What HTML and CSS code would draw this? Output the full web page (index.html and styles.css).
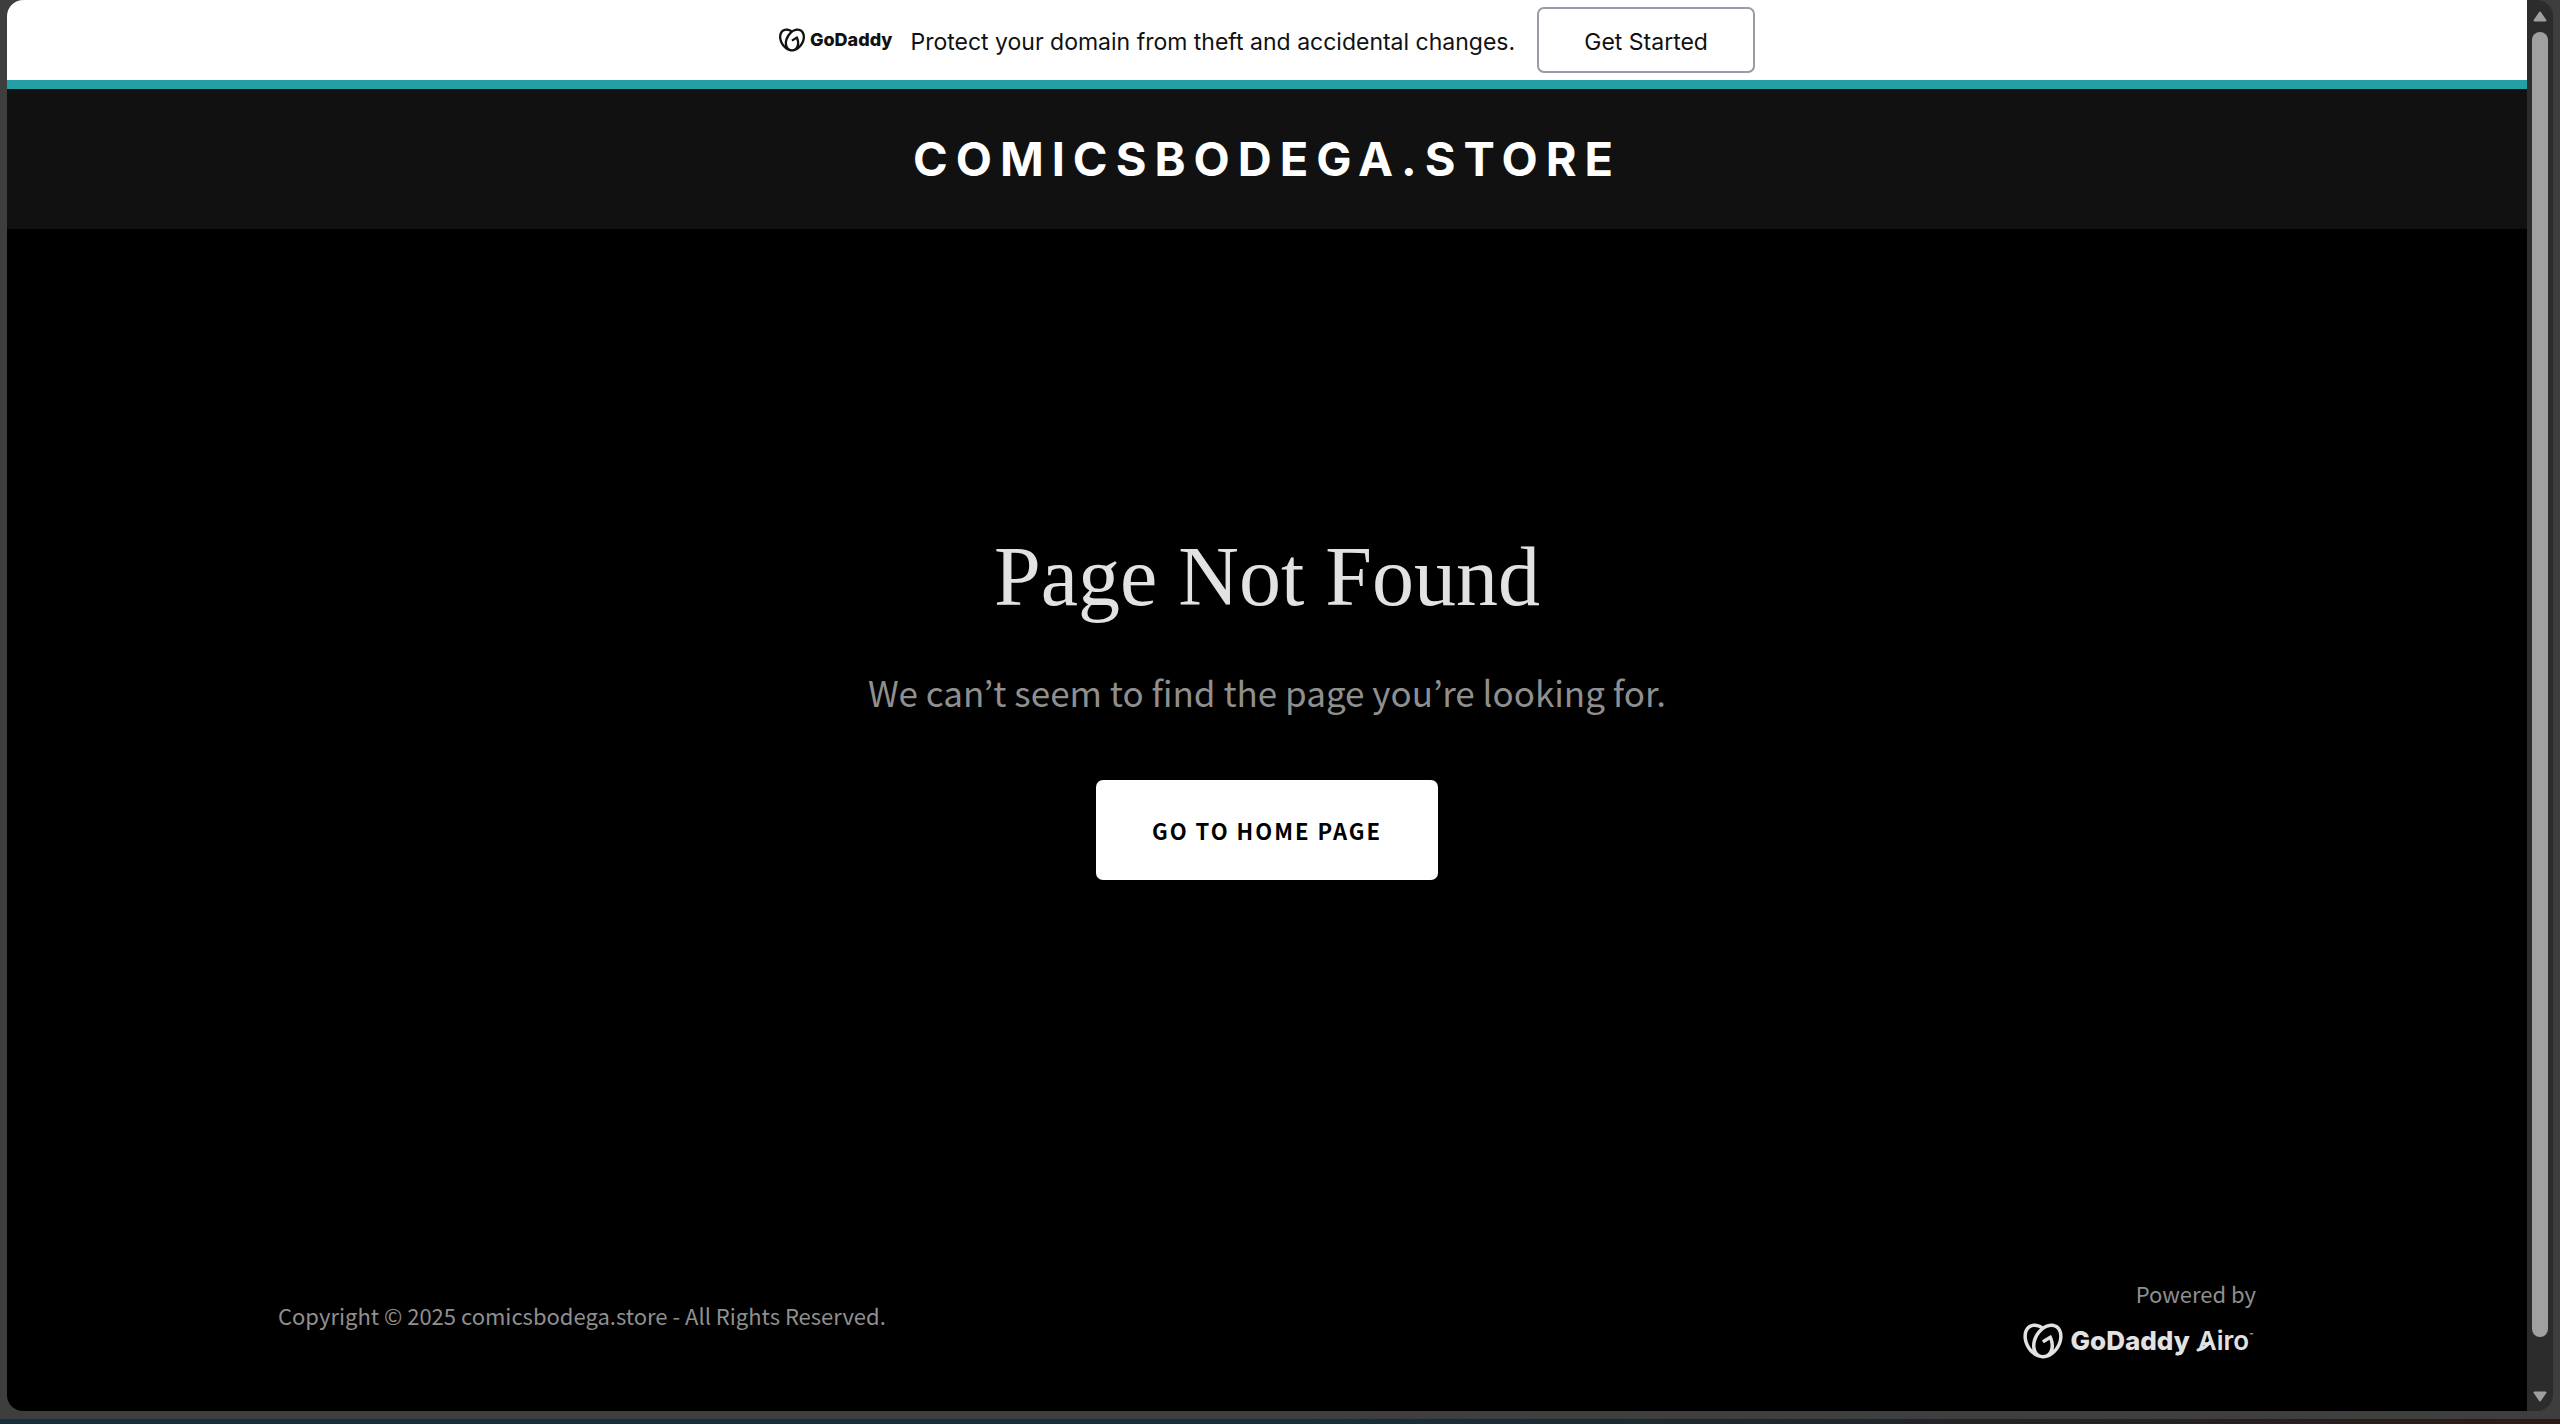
FILE: index.html
```html
<!DOCTYPE html>
<html lang="en">
<head>
<meta charset="utf-8">
<title>Page Not Found</title>
<link rel="stylesheet" href="styles.css">
</head>
<body>
<svg width="0" height="0" class="sprite" aria-hidden="true">
  <symbol id="heart" viewBox="0 1 24 22">
    <path fill="currentColor" d="M20.702 2.29c-2.494-1.554-5.778-1.187-8.706.654C9.076 1.104 5.79.736 3.3 2.29c-3.941 2.463-4.42 8.806-1.07 14.167 2.47 3.954 6.333 6.269 9.77 6.226 3.439.043 7.301-2.273 9.771-6.226 3.347-5.361 2.872-11.704-1.069-14.167zM4.042 15.328a12.838 12.838 0 01-1.546-3.541 10.12 10.12 0 01-.336-3.338c.15-1.98.956-3.524 2.27-4.345 1.315-.822 3.052-.87 4.903-.137.281.113.556.24.825.382A15.11 15.11 0 007.5 7.54c-2.035 3.255-2.655 6.878-1.945 9.765a13.247 13.247 0 01-1.514-1.98zm17.465-3.541a12.866 12.866 0 01-1.547 3.54 13.25 13.25 0 01-1.513 1.984c.635-2.589.203-5.76-1.353-8.734a.39.39 0 00-.563-.153l-4.852 3.032a.397.397 0 00-.126.546l.712 1.139a.395.395 0 00.547.126l3.145-1.965c.101.306.203.606.28.916.296 1.086.41 2.214.335 3.337-.15 1.982-.956 3.525-2.27 4.347a4.437 4.437 0 01-2.25.65h-.101a4.432 4.432 0 01-2.25-.65c-1.314-.822-2.121-2.365-2.27-4.347-.074-1.123.039-2.251.336-3.337a13.212 13.212 0 014.05-6.482 10.148 10.148 0 012.849-1.765c1.845-.733 3.586-.685 4.9.137 1.316.822 2.122 2.365 2.271 4.345a10.146 10.146 0 01-.33 3.334z"/>
  </symbol>
</svg>
<div class="window">
  <div class="page">
    <aside class="banner">
      <span class="brand"><svg class="brand-mark"><use href="#heart"/></svg><span>GoDaddy</span></span>
      <p class="banner-text">Protect your domain from theft and accidental changes.</p>
      <button class="banner-button" type="button">Get Started</button>
    </aside>
    <header class="header">
      <a class="site-name" href="#">COMICSBODEGA.STORE</a>
    </header>
    <main class="main">
      <h1 class="title">Page Not Found</h1>
      <p class="message">We can’t seem to find the page you’re looking for.</p>
      <a class="home-link" href="#">GO TO HOME PAGE</a>
    </main>
    <footer class="footer">
      <p class="copyright">Copyright © 2025 comicsbodega.store - All Rights Reserved.</p>
      <div class="powered">
        <span>Powered by</span>
        <a class="airo" href="#"><svg class="airo-mark"><use href="#heart"/></svg><span>GoDaddy</span><span class="airo-name">Airo<span class="tm">™</span><svg class="swoosh" viewBox="0 0 20 14"><path d="M2 12C7 11 11 8 14 4" fill="none" stroke="currentColor" stroke-width="3" stroke-linecap="round"/></svg></span></a>
      </div>
    </footer>
  </div>
  <div class="scrollbar" aria-hidden="true">
    <svg class="arrow" viewBox="0 0 14 11"><path d="M7 1.5 12.5 9.5H1.500z" fill="#a0a0a0" stroke="#a0a0a0" stroke-width="2" stroke-linejoin="round"/></svg>
    <div class="thumb"></div>
    <svg class="arrow" viewBox="0 0 14 11"><path d="M7 9.500 12.5 1.500H1.500z" fill="#a0a0a0" stroke="#a0a0a0" stroke-width="2" stroke-linejoin="round"/></svg>
  </div>
</div>
<div class="desktop-edge"></div>
</body>
</html>
```
FILE: styles.css
```css
* { box-sizing: border-box; }

body {
  margin: 0;
  min-height: 100vh;
  display: flex;
  flex-direction: column;
  background: #3e3e3e;
  font-family: "Noto Sans CJK KR", "Noto Sans", sans-serif;
}

h1, p { margin: 0; }
a { color: inherit; text-decoration: none; }
.sprite { position: absolute; }

.window {
  flex: 1;
  display: flex;
  margin: 0 7px 8px;
  border-radius: 16px;
  overflow: hidden;
  background: #2c2c2c;
}

.page {
  flex: 1;
  display: flex;
  flex-direction: column;
  background: #000;
}

.banner {
  display: flex;
  align-items: center;
  justify-content: center;
  height: 89px;
  border-bottom: 9px solid #249fa5;
  background: #fff;
  color: #111;
  font: 23px/32px Inter, sans-serif;
}

.brand {
  display: flex;
  align-items: center;
  gap: 5px;
  margin-right: 18px;
  font-size: 18px;
  line-height: 24px;
  font-weight: 800;
}
.brand-mark { width: 26px; height: 24px; }
.banner-text { padding-top: 4px; }

.banner-button {
  width: 218px;
  height: 66px;
  margin-left: 22px;
  padding: 4px 0 0;
  border: 2px solid #979ba5;
  border-radius: 7px;
  background: #fff;
  color: #111;
  font: inherit;
}

.header {
  display: flex;
  justify-content: center;
  padding: 40px 24px;
  background: #111;
}
.site-name {
  color: #fff;
  font: 700 47px/60px Inter, sans-serif;
  letter-spacing: 8px;
}

.main {
  flex: 1;
  display: flex;
  flex-direction: column;
  align-items: center;
  padding: 296px 24px 0;
}
.title {
  color: #e2e2e2;
  font: 400 84px/104px "Liberation Serif", serif;
}
.message {
  margin-top: 35px;
  color: #8f8f8f;
  font-size: 35px;
  line-height: 56px;
}
.home-link {
  margin-top: 60px;
  padding: 34px 56px;
  border-radius: 7px;
  background: #fff;
  color: #000;
  font-size: 22px;
  line-height: 32px;
  font-weight: 700;
  letter-spacing: 2px;
}

.footer {
  display: flex;
  align-items: center;
  justify-content: space-between;
  padding: 0 271px 52px;
  color: #8f8f8f;
  font-size: 22px;
  line-height: 36px;
}
.copyright { padding-bottom: 4px; }
.powered {
  display: flex;
  flex-direction: column;
  align-items: flex-end;
  gap: 12px;
}
.airo {
  display: flex;
  align-items: center;
  gap: 8px;
  padding-right: 3px;
  color: #e2e2e2;
  font: 800 26px/36px Inter, sans-serif;
}
.airo-mark { width: 40px; height: 36px; }
.airo-name { position: relative; display: flex; font-weight: 600; }
.swoosh {
  position: absolute;
  left: -2px;
  bottom: 7px;
  width: 20px;
  height: 14px;
}
.tm { font-size: 6px; line-height: 26px; }

.scrollbar {
  width: 26px;
  display: flex;
  flex-direction: column;
  align-items: center;
  gap: 10px;
  padding: 11px 0 9px;
}
.arrow { width: 14px; height: 11px; }
.thumb {
  width: 16px;
  flex: 1;
  margin-bottom: 44px;
  border-radius: 8px;
  background: #a0a0a0;
}

.desktop-edge {
  height: 5px;
  background: linear-gradient(90deg, #15303c, #15303c 50%, #2e1b17);
}
```
